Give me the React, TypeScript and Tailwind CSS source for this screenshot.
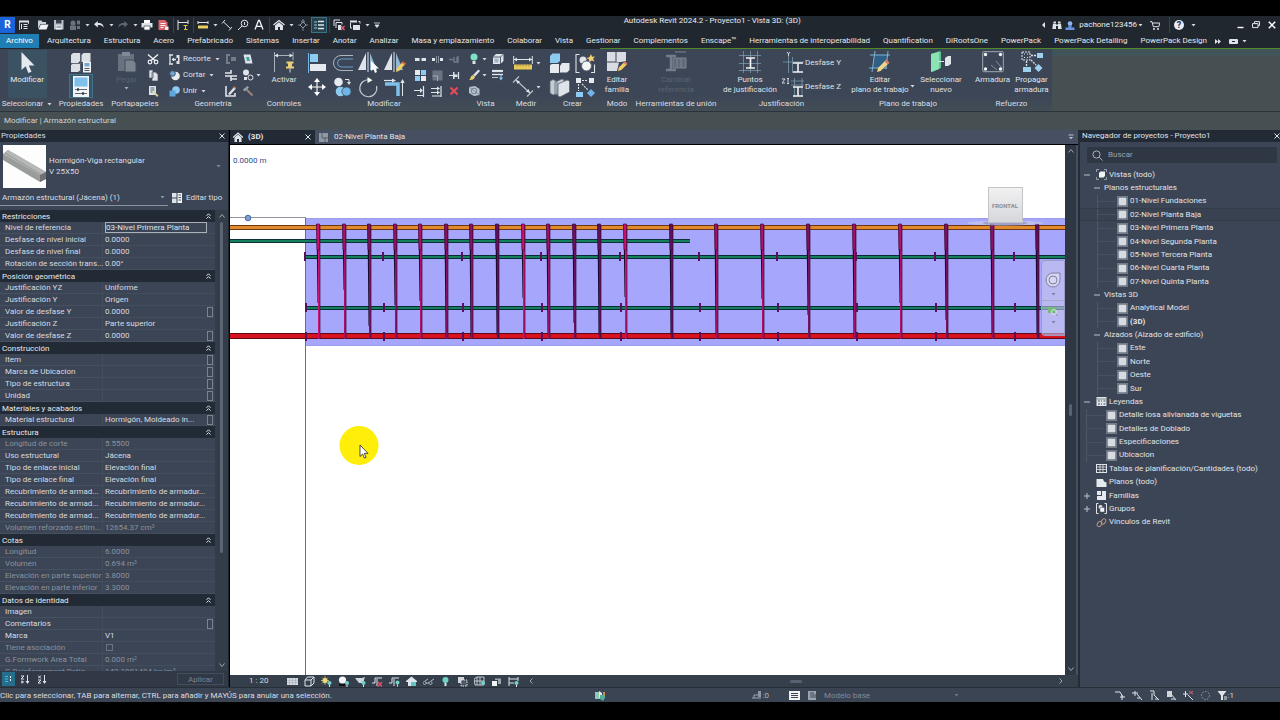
import React from "react";

type IconProps = { s?: number; w?: number; h?: number; className?: string; children?: React.ReactNode };

function Ico({ s = 16, w, h, className = "", children }: IconProps) {
  const vw = w ?? s;
  const vh = h ?? s;
  return (
    <svg width={vw} height={vh} viewBox={`0 0 ${vw} ${vh}`} fill="none" className={`shrink-0 ${className}`} aria-hidden="true">
      {children}
    </svg>
  );
}

const L = "#dfe4ea";
const B = "#9fd0ee";

function Caret({ className = "text-[#d5dae0]" }: { className?: string }) {
  return (
    <svg width="5" height="3" viewBox="0 0 5 3" className={`shrink-0 ${className}`} aria-hidden="true">
      <path d="M0.5 0h4L2.5 2.6z" fill="currentColor" />
    </svg>
  );
}

/* ---------- Quick access toolbar ---------- */

const quick: Record<string, React.ReactNode> = {
  Inicio: (
    <Ico s={12}>
      <path d="M1 1.500h10v2H1z" fill={L} />
      <path d="M1.500 3v8M10.500 3v2" stroke={L} strokeWidth=".8" />
      <path d="M3.500 5v5M5.500 5.500h4M5.500 7.500h4M5.500 9.500h4" stroke={L} />
    </Ico>
  ),
  Abrir: (
    <Ico s={12}>
      <path d="M1 10V1.500h3.500l1 1.500H9v2H3.500z" fill="#c9d0d8" />
      <path d="M3.800 5.500H11.500L9.500 10.500H1.500z" fill="#f0f3f6" />
    </Ico>
  ),
  Guardar: (
    <Ico s={12}>
      <path d="M1 1h9.500v9.500H1z" fill="#b9c1cb" />
      <path d="M3 1h5.500v3.500H3z" fill="#39424f" />
      <path d="M3 6.500h5.500v4H3z" fill="#eef1f4" />
      <path d="M3.500 8h4.500" stroke="#59626f" />
    </Ico>
  ),
  Sincronizar: (
    <Ico s={12}>
      <circle cx="4" cy="4" r="2.500" fill="#6a7380" />
      <path d="M1 6.500h6v4.500H1zM8 1.500h3v4H8zM8 7h3v3H8z" fill="#6a7380" />
    </Ico>
  ),
  Deshacer: (
    <Ico s={12}>
      <path d="M4.800 2 1 5.200l3.800 3.200V6.300c2.500-.6 4.500 0 5.700 2.500.4-3.400-2-5-5.700-4.800z" fill={L} />
    </Ico>
  ),
  Rehacer: (
    <Ico s={12}>
      <path d="M7.200 2 11 5.200 7.200 8.400V6.300c-2.500-.6-4.500 0-5.700 2.500-.4-3.400 2-5 5.700-4.800z" fill="#5d6673" />
    </Ico>
  ),
  Imprimir: (
    <Ico s={12}>
      <path d="M3 1h6v3H3z" fill="#fff" />
      <path d="M.5 4h11v4.500h-11z" fill="#dfe4ea" />
      <path d="M3 7h6v4H3z" fill="#fff" stroke="#39424f" strokeWidth=".7" />
    </Ico>
  ),
  "Exportar PDF": (
    <Ico s={12}>
      <path d="M1.500 1H8l2.500 2.500V11h-9z" fill="#d9646b" />
      <path d="M3.500 4.500h5M3.500 6.500h5M3.500 8.500h3" stroke="#fff" />
      <path d="M8 7.500h3.500V11H8z" fill="#f4e7e8" />
    </Ico>
  ),
  Acotar: (
    <Ico s={12}>
      <path d="M1 1v10M11 1v4M1 3.500h10" stroke={L} strokeWidth="1" />
      <path d="M6.500 6.500h4M8.500 6.500v4M7 10.500h3.500" stroke="#e8c24c" />
    </Ico>
  ),
  Medir: (
    <Ico s={12}>
      <path d="M1 2v3M11 2v3M1 3.500h10" stroke={L} />
      <path d="M1 6.500h10v3H1z" fill="#e9cf62" />
    </Ico>
  ),
  "Cota alineada": (
    <Ico s={12}>
      <path d="M1 4.500 4 1M8 11.500l3-3.500M2.500 3l7 6.500" stroke={L} />
    </Ico>
  ),
  "Etiqueta por categoría": (
    <Ico s={12}>
      <circle cx="7.500" cy="4.500" r="3.300" stroke={L} />
      <path d="M5 7 1 11M7.500 3v3" stroke={L} />
    </Ico>
  ),
  Texto: (
    <Ico s={12}>
      <path d="M2 10.500 5.500 1.500h1L10 10.500M3.300 7.300h5.400" stroke="#f3f5f7" strokeWidth="1.300" />
    </Ico>
  ),
  "Vista 3D": (
    <Ico s={12}>
      <path d="M.5 6 6 1.500 11.500 6" stroke={L} strokeWidth="1.300" />
      <path d="M2 6.500 6 3.300l4 3.200V11H7V8H5v3H2z" fill={L} />
    </Ico>
  ),
  Sección: (
    <Ico s={12}>
      <path d="m6 3 3 3-3 3-3-3z" stroke="#8d97a3" />
      <path d="m6 .5 1.600 2.500H4.400zM6 9v3M1 6h2M9 6h2" stroke="#8d97a3" strokeWidth=".8" />
    </Ico>
  ),
  "Líneas finas": (
    <Ico s={12}>
      <path d="M1 3h3M1 6h3M1 9h3" stroke="#8fc9e0" />
      <path d="M5 2.500h6M5 6h6M5 9.500h6" stroke={L} strokeWidth="1.600" />
    </Ico>
  ),
  "Cerrar inactivas": (
    <Ico s={12}>
      <path d="M1 1h6M1 1v6M3 3.500h6v2M3 3.500V9" stroke={L} />
      <path d="M5 6h3v5H5z" fill={L} />
      <path d="m8 7 3.500 4M11.500 7 8 11" stroke="#e0607a" strokeWidth="1.300" />
    </Ico>
  ),
  "Cambiar ventana": (
    <Ico s={12}>
      <path d="M1 1.500h7v2H1zM4 6h7v5H4z" fill={L} />
      <path d="M1.500 4v5H3M9.500 2.500h1.500v2" stroke={L} />
    </Ico>
  ),
};

function QuickButton({ name, active = false }: { name: string; active?: boolean }) {
  return (
    <button
      type="button"
      aria-label={name}
      className={
        active
          ? "flex h-4 w-4 items-center justify-center border border-[#3d7387] bg-[#26404d]"
          : "flex h-4 w-4 items-center justify-center"
      }
    >
      {quick[name]}
    </button>
  );
}

function QuickCaret() {
  return (
    <button type="button" aria-label="Más opciones" className="flex h-4 w-2 items-center justify-center">
      <Caret />
    </button>
  );
}

function Sep() {
  return (
    <span className="flex h-4 w-1 justify-center">
      <span className="w-px bg-[#39434f]" />
    </span>
  );
}

function TitleBar() {
  return (
    <header className="flex h-[18px] shrink-0 items-center bg-[#20272f]">
      <div className="flex items-center">
        <button type="button" aria-label="Revit" className="mr-px flex h-4 w-[15px] items-center justify-center bg-[#1b63d8] text-[10px] leading-none font-bold text-white">
          R
        </button>
        <QuickButton name="Inicio" />
        <span className="w-[3px]" />
        <QuickButton name="Abrir" />
        <QuickButton name="Guardar" />
        <QuickButton name="Sincronizar" />
        <QuickCaret />
        <QuickButton name="Deshacer" />
        <QuickCaret />
        <QuickButton name="Rehacer" />
        <QuickCaret />
        <QuickButton name="Imprimir" />
        <QuickButton name="Exportar PDF" />
        <Sep />
        <QuickButton name="Acotar" />
        <Sep />
        <QuickButton name="Medir" />
        <QuickCaret />
        <QuickButton name="Cota alineada" />
        <QuickButton name="Etiqueta por categoría" />
        <QuickButton name="Texto" />
        <Sep />
        <QuickButton name="Vista 3D" />
        <QuickCaret />
        <QuickButton name="Sección" />
        <QuickButton name="Líneas finas" active />
        <Sep />
        <QuickButton name="Cerrar inactivas" />
        <QuickButton name="Cambiar ventana" />
        <QuickCaret />
        <button type="button" aria-label="Personalizar barra" className="flex h-4 w-3 items-center justify-center">
          <Ico s={6}>
            <path d="M0 1h6M1 3h4L3 5.600z" stroke={L} strokeWidth=".8" fill={L} />
          </Ico>
        </button>
      </div>
      <h1 className="min-w-0 flex-1 truncate pb-2 pl-1 text-center text-[8px] leading-[12px] text-[#e8ebee]">
        Autodesk Revit 2024.2 - Proyecto1 - Vista 3D: (3D)
      </h1>
      <div className="flex items-center text-[8px] text-[#e8ebee]">
        <button type="button" aria-label="Contraer" className="flex w-3 justify-center">
          <Ico w={3} h={6}>
            <path d="M3 0v6L0 3z" fill={L} />
          </Ico>
        </button>
        <button type="button" aria-label="Buscar ayuda" className="flex w-4 justify-center">
          <Ico w={10} h={9}>
            <path d="M1 2.500h3V8H.3zM6 2.500h3L9.700 8H6zM1.500.5H4v1.500H1.500zM6 .5h2.500V2H6zM4 3.500h2V5H4z" fill={L} />
          </Ico>
        </button>
        <button type="button" className="flex items-center">
          <Ico w={10} h={9} className="mr-1">
            <circle cx="5" cy="2.500" r="2.300" fill="#8fb4ee" />
            <path d="M3.500 4h3v2.500H9.500V9H.5V6.500h3z" fill="#6b95e0" />
          </Ico>
          pachone123456
          <Caret className="ml-px text-[#d5dae0]" />
        </button>
        <button type="button" aria-label="Tienda" className="mx-1 flex w-4 justify-center">
          <Ico w={10} h={9}>
            <path d="M0 .7h2l1.300 5h5.500l1-3.700H2.600" stroke={L} />
            <circle cx="4" cy="8" r="1" fill={L} />
            <circle cx="8" cy="8" r="1" fill={L} />
          </Ico>
        </button>
        <Sep />
        <button type="button" aria-label="Ayuda" className="mr-1 flex w-4 justify-center">
          <span className="flex h-[10px] w-[10px] items-center justify-center rounded-full bg-[#e6edf8] text-[9px] leading-none font-bold text-[#1f2a3c]">?</span>
        </button>
        <Caret className="mr-9 text-[#d5dae0]" />
        <button type="button" aria-label="Minimizar" className="flex w-4 justify-center">
          <Ico w={7} h={8}>
            <path d="M.5 6.500h6" stroke="#fff" strokeWidth="1.400" />
          </Ico>
        </button>
        <button type="button" aria-label="Restaurar" className="flex w-4 justify-center">
          <Ico s={8}>
            <path d="M2.500 2V.6h5v4H6M.5 2.600h5.500v4H.5z" stroke={L} />
          </Ico>
        </button>
        <button type="button" aria-label="Cerrar" className="flex w-4 justify-center">
          <Ico s={8}>
            <path d="m.8.800 6.400 6.400M7.200.8.800 7.200" stroke="#fff" strokeWidth="1.500" />
          </Ico>
        </button>
      </div>
    </header>
  );
}

/* ---------- Ribbon ---------- */

const tabs = [
  "Arquitectura", "Estructura", "Acero", "Prefabricado", "Sistemas", "Insertar", "Anotar", "Analizar",
  "Masa y emplazamiento", "Colaborar", "Vista", "Gestionar", "Complementos", "Enscape™",
  "Herramientas de interoperabilidad", "Quantification", "DiRootsOne", "PowerPack", "PowerPack Detailing", "PowerPack Design",
];

function RibbonTabs() {
  return (
    <nav className="flex h-[14px] shrink-0 items-center bg-[#20272f] text-[8px] text-[#e3e7eb]" aria-label="Fichas">
      <button type="button" className="mr-2 h-[14px] w-[39px] bg-[#1f7fb4] text-white">
        Archivo
      </button>
      <div className="flex items-center gap-[13px] whitespace-nowrap">
        {tabs.map((t) => (
          <button type="button" key={t}>
            {t}
          </button>
        ))}
      </div>
      <button type="button" aria-label="Más fichas" className="ml-2">
        <Ico w={6} h={5}>
          <path d="M0 0v5l3-2.500zM3 0v5l3-2.500z" fill={L} />
        </Ico>
      </button>
      <button type="button" aria-label="Minimizar cinta" className="ml-2 flex items-center gap-1">
        <Ico w={9} h={5}>
          <rect width="9" height="5" rx="1" fill={L} />
          <path d="M3 2.500h3" stroke="#20272f" />
        </Ico>
        <Caret />
      </button>
    </nav>
  );
}

function Panel({ label, className, children, caret = false }: { label: string; className: string; children: React.ReactNode; caret?: boolean }) {
  return (
    <section className={`flex shrink-0 flex-col ${className}`}>
      <div className="flex h-[49px] items-start justify-center pt-[2px]">{children}</div>
      <div className="flex h-[12px] items-center justify-center gap-1 whitespace-nowrap text-[#d9dee4]">
        {label}
        {caret && <Caret />}
      </div>
    </section>
  );
}

function Big({ icon, lines, className = "", dim = false, caret = false }: { icon: React.ReactNode; lines: string[]; className?: string; dim?: boolean; caret?: boolean }) {
  return (
    <button
      type="button"
      disabled={dim}
      className={`flex flex-col items-center whitespace-nowrap leading-[10px] ${dim ? "text-[#596271]" : "text-[#dfe3e8]"} ${className}`}
    >
      <span className="mb-[2px] flex h-[22px] items-center">{icon}</span>
      {lines.map((l, i) => (
        <span key={l} className="relative">
          {l}
          {caret && i === lines.length - 1 && (
            <span className="absolute top-0 -right-[6px]">
              <Caret />
            </span>
          )}
        </span>
      ))}
    </button>
  );
}

function Tool({ name, size = "m", children }: { name: string; size?: "m" | "s"; children: React.ReactNode }) {
  return (
    <button type="button" aria-label={name} className={size === "m" ? "flex h-[24px] w-[22px] items-center justify-center" : "flex h-4 w-[17px] items-center justify-center"}>
      {children}
    </button>
  );
}

function Ribbon() {
  return (
    <div className="flex h-[63px] shrink-0 overflow-hidden border-b border-[#2b333c] bg-[#465052] text-[8px] leading-[10px]">
      <div className="flex shrink-0 bg-gradient-to-b from-[#3d4657] from-75% to-[#424d55]">
        <Panel label="Seleccionar" className="w-[54px]" caret>
          <button type="button" className="-mt-px flex h-[48px] w-[39px] flex-col items-center bg-[#3b5263] pt-[2px] text-[#e6eaee]">
            <Ico w={16} h={22}>
              <path d="M2.500 0v18l4.200-3.800L9.300 21l3.200-1.300-2.700-6.200h5.700z" fill="#e6e9ee" />
            </Ico>
            <span className="mt-px">Modificar</span>
          </button>
        </Panel>

        <Panel label="Propiedades" className="w-[54px]">
          <div className="flex flex-col items-center">
            <button type="button" aria-label="Propiedades de tipo" className="flex h-[23px] w-6 items-center justify-center">
              <Ico s={22}>
                <path d="M1 3 3 1h7v8l-2 2H1zM11.500 3l2-2h7v8l-2 1h-7zM1 13l2-1.500h7v7L8 20H1z" fill="#dde1e6" />
                <path d="M1 11.500h19M10.500 1v19" stroke="#5b6574" strokeWidth=".8" />
                <rect x="13" y="9.500" width="8" height="11" fill="#f2f4f6" />
                <rect x="14.500" y="11" width="5" height="3.500" fill="#6ea9d2" />
                <path d="M14.500 16.500h5M14.500 18.500h5" stroke="#4d5664" />
              </Ico>
            </button>
            <button type="button" aria-label="Propiedades" className="flex h-6 w-6 items-center justify-center border border-[#44738a] bg-[#35566a]">
              <Ico w={16} h={21}>
                <rect width="16" height="21" fill="#f1f3f5" />
                <rect x="1.500" y="1.500" width="13" height="9" fill="#7fc0ea" />
                <path d="M2 13.500h12M2 17.500h12" stroke="#5a6472" />
                <path d="M5 12v3M10 16v3" stroke="#2f3945" strokeWidth="1.500" />
              </Ico>
            </button>
          </div>
        </Panel>

        <Panel label="Portapapeles" className="w-[54px]">
          <button type="button" disabled className="flex w-9 flex-col items-center text-[#566070]">
            <Ico s={22}>
              <path d="M2 3h16v17H2z" fill="#687180" />
              <path d="M6 1h8v4H6z" fill="#808995" />
              <path d="M9 9h8l3 3v9H9z" fill="#7a8390" stroke="#454e5d" />
            </Ico>
            <span className="my-[2px]">Pegar</span>
            <Caret className="text-[#aab1ba]" />
          </button>
          <div className="flex flex-col">
            <Tool name="Cortar al portapapeles" size="s">
              <Ico s={12}>
                <path d="M1 1.500 8.500 8M11 1.500 3.500 8" stroke="#f1f3f5" strokeWidth="1.400" />
                <circle cx="3" cy="9" r="1.800" stroke="#f1f3f5" strokeWidth="1.200" />
                <circle cx="9" cy="9" r="1.800" stroke="#f1f3f5" strokeWidth="1.200" />
              </Ico>
            </Tool>
            <Tool name="Copiar al portapapeles" size="s">
              <Ico s={12}>
                <path d="M2 1h4v8H2zM5 3h3.500L11 5.500V12H5z" fill={L} stroke="#48515f" strokeWidth=".7" />
              </Ico>
            </Tool>
            <Tool name="Copiar propiedades" size="s">
              <Ico s={12}>
                <path d="M2 1h7v9H2z" fill={L} />
                <path d="M3.500 3h4M3.500 5h4M3.500 7h2" stroke="#56606e" />
                <path d="m7 6 4.500 4.500-1.500 1.500L6.500 8z" fill="#d8cf93" />
              </Ico>
            </Tool>
          </div>
        </Panel>

        <Panel label="Geometría" className="w-[102px]">
          <div className="flex w-[57px] flex-col text-[#dfe3e8]">
            {[
              ["Recorte", <Ico s={11} key="a"><path d="M1 1v9M0 1h4M0 10h4M3 5.500h4M4.500 4v3" stroke={L} strokeWidth="1.300" /><path d="M7.500 1h3v9h-3V7h1.500V4H7.500z" fill={L} /></Ico>],
              ["Cortar", <Ico s={11} key="b"><circle cx="6.500" cy="6" r="4.300" fill="#e9edf1" /><circle cx="3.500" cy="3.500" r="2.800" fill="#6aa9d6" stroke="#454e5d" /></Ico>],
              ["Unir", <Ico s={11} key="c"><circle cx="7" cy="4" r="3.800" fill="#8ecbf2" /><path d="M.5 4.500h6V10.500h-6z" fill="#5fa6dc" /></Ico>],
            ].map(([name, icon]) => (
              <button type="button" key={name as string} className="flex h-4 items-center gap-[3px] pl-1">
                {icon}
                <span>{name}</span>
                <Caret className="ml-px text-[#d5dae0]" />
              </button>
            ))}
          </div>
          <div className="grid grid-cols-[17px_22px]">
            <Tool name="Unión de vigas" size="s">
              <Ico s={12}><path d="M1 1h4v2H3v6h2v2H1zM6 4h5v4H6z" fill="#737c89" /></Ico>
            </Tool>
            <Tool name="Dividir cara" size="s">
              <Ico s={12}><path d="M1.500 1.500h7l2 9h-7z" fill="#dfe4ea" /><path d="M4 4h3l1 4H5z" fill="#3aa7a0" /></Ico>
            </Tool>
            <Tool name="Uniones de muro" size="s">
              <Ico s={12}><path d="M0 4h6V1M0 7h12M6 10h6M6 7v5" stroke={L} strokeWidth="1.600" /></Ico>
            </Tool>
            <div className="flex items-center">
              <Tool name="Pintar" size="s">
                <Ico s={12}><circle cx="4" cy="3.500" r="3" fill={L} /><circle cx="8.500" cy="8.500" r="2.500" stroke={L} /><path d="M2 8h3v3H2z" fill={L} /></Ico>
              </Tool>
              <Caret />
            </div>
            <Tool name="Pintura" size="s">
              <Ico s={12}><path d="M1 1v10h9V8" stroke={L} strokeWidth="1.600" /><path d="m3 9 6-7 2 1.500-6 6.500z" fill={L} /><path d="m8.500 1.800 2.200 1.600" stroke="#d27a3f" strokeWidth="1.500" /></Ico>
            </Tool>
            <Tool name="Demoler" size="s">
              <Ico s={12}><path d="m4.500 4.500 6 6" stroke="#a08478" strokeWidth="1.800" /><path d="M1 4.500 5.500 1 7 2.500 2.500 6.500z" fill="#9aa2ad" /></Ico>
            </Tool>
          </div>
        </Panel>

        <Panel label="Controles" className="w-10">
          <Big
            lines={["Activar"]}
            icon={
              <Ico s={22}>
                <path d="M1.500 1v20M20 1v8M2 4.500h18" stroke="#a9b1bb" />
                <path d="M1.500 4.500 5 2.500v4zM20 4.500l-3.500-2v4z" fill={L} />
                <path d="M13.500 10.500h7v2h-1.500v3h2v2h-8v-2h2v-3h-1.500z" fill="#e7cf78" />
                <path d="M17 17.500v4" stroke="#d5dae0" />
              </Ico>
            }
          />
        </Panel>

        <Panel label="Modificar" className="w-40">
          <div className="grid grid-cols-4 gap-x-1">
            <Tool name="Alinear">
              <Ico s={20}><path d="M1.500 0v20" stroke="#73b7e6" strokeWidth="1" /><rect x="3" y="1" width="8" height="8" fill="#8ecbf2" /><rect x="3" y="11" width="16" height="7" fill="#e6eaee" /></Ico>
            </Tool>
            <Tool name="Desfase">
              <Ico s={20}><path d="M20 2.500H8a7 7 0 0 0 0 15h12" stroke="#b9c1cb" strokeWidth=".9" /><path d="M20 6H8.500a4 4 0 0 0 0 8H20" stroke="#6ea9d2" strokeWidth=".9" /></Ico>
            </Tool>
            <Tool name="Simetría - Seleccionar eje">
              <Ico s={22}><path d="M0 18 8 1v17z" fill="#dfe4ea" /><path d="M12 1v17h7z" fill="#8fb9d4" /><path d="M10 0v20" stroke="#dfe4ea" /><path d="M13 9v10l2.500-2 1.500 4 2-1-1.500-3.500H21z" fill="#fff" /></Ico>
            </Tool>
            <Tool name="Simetría - Dibujar eje">
              <Ico s={22}><path d="M0 18 8 1v17z" fill="#dfe4ea" /><path d="M12 1v17h7z" fill="#8fb9d4" /><path d="M10 0v20" stroke="#dfe4ea" /><path d="m12 20 .7-3.300 6-7 2.600 2.200-6 6.800z" fill="#f0cf62" /><path d="m18.200 10 3.200 2.500" stroke="#d9654b" strokeWidth="2.200" /></Ico>
            </Tool>
            <Tool name="Desplazar">
              <Ico s={20}><path d="M10 3v14M3 10h14" stroke="#fff" strokeWidth="1.100" /><path d="m10 1 3 4H7zM10 19l3-4H7zM1 10l4-3v6zM19 10l-4-3v6z" fill="#fff" /></Ico>
            </Tool>
            <Tool name="Copiar">
              <Ico s={20}><circle cx="5.500" cy="5" r="4.300" fill="#e6eaee" /><circle cx="7.500" cy="14.500" r="4.800" fill="#8ecbf2" /><circle cx="13.500" cy="14.500" r="4.600" fill="#6fb4e6" stroke="#3d4657" strokeWidth=".8" /><path d="M12 2.500h4v3" stroke={L} /><path d="M14 5h4l-2 3z" fill={L} /></Ico>
            </Tool>
            <Tool name="Girar">
              <Ico s={21}><path d="M12.500 3A8.500 8.500 0 1 0 18.500 9" stroke="#c6ccd4" strokeWidth="1.100" /><path d="M9.500 0v6l5-2.800z" fill="#fff" /></Ico>
            </Tool>
            <Tool name="Recortar">
              <Ico s={21}><path d="M0 3.500h8" stroke={L} strokeWidth="1.200" /><path d="M1 7h13v12" stroke="#7fc0ea" strokeWidth="3.500" /><path d="M18.500 19V6" stroke={L} /><path d="m18.500 2 2.200 4h-4.400zM8 1.500l4 2-4 2z" fill={L} /></Ico>
            </Tool>
          </div>
          <div className="ml-[6px] grid grid-cols-3">
            <Tool name="Dividir elemento" size="s"><Ico s={11}><path d="M0 4h4.500v3H0zM6.500 4H11v3H6.500z" fill={L} /></Ico></Tool>
            <Tool name="Dividir con hueco" size="s"><Ico s={11}><path d="M0 4h3v3H0zM8 4h3v3H8z" fill={L} /><path d="M4.500 2v7M6.500 2v7" stroke="#9aa3ae" strokeWidth=".8" /></Ico></Tool>
            <Tool name="Desbloquear" size="s"><Ico s={11}><path d="M0 5.500h4M5 3v5h3V3M9 2v7" stroke="#6f7886" strokeWidth="1.500" /></Ico></Tool>
            <Tool name="Matriz" size="s"><Ico s={11}><path d="M0 0h5v5H0zM6 6h5v5H6z" fill="#e6eaee" /><path d="M6 0h5v5H6zM0 6h5v5H0z" fill="#8ecbf2" /></Ico></Tool>
            <Tool name="Escala" size="s"><Ico s={11}><rect x=".5" y=".5" width="10" height="10" fill="#6a7381" /><path d="M.5 6h5v5" stroke="#a1a9b4" /></Ico></Tool>
            <Tool name="Bloquear" size="s"><Ico s={11}><path d="M0 5.500h4M9.500 2v7" stroke={L} strokeWidth="1.200" /><path d="M4 2h1.500v2.500h3v2.500h-3V9H4z" fill={L} /></Ico></Tool>
            <Tool name="Alargar elemento" size="s"><Ico s={12}><path d="M0 5.500h7M9.500 1v11M3 10.500h6" stroke={L} strokeWidth="1.200" /><path d="m6 3 3 2.500L6 8z" fill={L} /></Ico></Tool>
            <Tool name="Alargar varios" size="s"><Ico s={12}><path d="M0 3.500h6M0 7.500h6M10 1v11M1 11h9" stroke={L} strokeWidth="1.200" /><path d="M6 1.500 9 3.500 6 5.500zM6 5.500l3 2-3 2z" fill={L} /></Ico></Tool>
            <Tool name="Suprimir" size="s"><Ico s={10}><path d="m1.500 1.500 7 7M8.500 1.500l-7 7" stroke="#ee4a57" strokeWidth="2" /></Ico></Tool>
          </div>
        </Panel>

        <Panel label="Vista" className="w-[43px]">
          <div className="grid grid-cols-[24px_17px]">
            <div className="flex items-center"><Tool name="Ocultar en vista" size="s"><Ico w={8} h={12}><circle cx="4" cy="4" r="3.500" fill="#7fe0c6" /><path d="M2.500 8h3v3h-3z" fill={L} /></Ico></Tool><Caret /></div>
            <Tool name="Caja de sección" size="s"><Ico s={12}><path d="m1 4 3-3h7.500v7l-3 3H1z" fill="#dfe4ea" /><path d="M1 4h7.500v7M8.500 4l3-3" stroke="#556070" /><path d="M2.500 5.500h4v4h-4z" fill="#9fb6ca" /></Ico></Tool>
            <div className="flex items-center"><Tool name="Modificar gráficos" size="s"><Ico s={12}><path d="m5 6 5.500-5.500L12 2 7 7.500z" fill="#dfe4ea" /><path d="M5 6 7 8c-1 3-4 3-6 3 2-1 1-4 4-5z" fill="#e6cf72" /></Ico></Tool><Caret /></div>
            <Tool name="Cambiar grosor" size="s"><Ico s={12}><path d="M0 2h11" stroke={L} strokeWidth="2.200" /><path d="M0 5.500h11" stroke={L} strokeWidth="1.400" /><path d="M0 8.500h6" stroke={L} strokeWidth=".8" /><path d="M9 6v4" stroke="#8ecbf2" /><path d="M7 8.500h4L9 11.500z" fill="#8ecbf2" /></Ico></Tool>
            <Tool name="Ocultar categoría" size="s"><Ico s={12}><path d="m1 2 6-1 4.500 3v6L6 11 1 8z" fill="#b8c3ce" /><circle cx="6" cy="6" r="2.800" stroke="#6f7f90" /><path d="m1 2 10.500 8" stroke="#6f7f90" strokeWidth=".7" /></Ico></Tool>
          </div>
        </Panel>

        <Panel label="Medir" className="w-[38px]">
          <div className="flex flex-col">
            <div className="flex items-center gap-[2px]">
              <Tool name="Medir distancia"><Ico s={20}><path d="M.7 3v8M19.300 3v8M1 6.500h18" stroke={L} /><path d="M1 6.500 4 4.500v4zM19 6.500l-3-2v4z" fill={L} /><path d="M1 11.500h18v5H1z" fill="#e9c958" /><path d="M4 11.500v2M7 11.500v2M10 11.500v2M13 11.500v2M16 11.500v2" stroke="#8a7a3c" strokeWidth=".8" /></Ico></Tool>
              <Caret />
            </div>
            <div className="flex items-center gap-[2px]">
              <Tool name="Acotar alineado"><Ico s={22}><path d="M1 6.500 7 .5M15 20.500l6-6M4 4l14 13" stroke="#b9c1cb" strokeWidth="1.100" /><path d="m4 4 4 1.500L5.500 8zM18 17l-4-1.500 2.500-2.500z" fill="#dfe4ea" /></Ico></Tool>
              <Caret />
            </div>
          </div>
        </Panel>

        <Panel label="Crear" className="w-[55px]">
          <div className="grid grid-cols-2 gap-x-1">
            <Tool name="Crear piezas"><Ico s={21}><path d="m1 3 2.500-2.500H11V8L8.500 10H1z" fill="#8ecbf2" /><path d="m1 12 2-1h7v9H1zM11 13l2-3h7.500v7L18 19.500h-7z" fill="#e6eaee" /></Ico></Tool>
            <Tool name="Crear grupo"><Ico s={21}><path d="M4.500 1.500H1v18h3.500M16 19.500h3.500v-8" stroke={L} strokeWidth="1.100" /><circle cx="8" cy="7" r="3.500" fill={L} /><circle cx="11.500" cy="13" r="5" fill="#f2f4f6" stroke="#56606e" /><path d="m16 1 1 2.800 3-.3-2 2.200 1.500 2.600-2.900-.8-2.300 1.700-.3-2.900L11.500 5l2.900-.7z" fill="#f4cf74" /></Ico></Tool>
            <Tool name="Crear montaje"><Ico s={21}><path d="M1 4 4 2.500l4 2V17l-4 1-3-2zM6 5l7-3 2 1v11l-7 4-2-1z" fill="#c6ccd3" stroke="#596371" strokeWidth=".8" /><path d="m9 7 9-4 2.500 1v11L11 20l-2-1z" fill="#dfe4ea" stroke="#596371" strokeWidth=".8" /></Ico></Tool>
            <Tool name="Crear similar"><Ico s={21}><path d="M1 1h5v5H1zM14 1h5v5h-5z" fill="#e6eaee" /><path d="M1 15h7v5H1z" fill="#8ecbf2" /><path d="m16 12 4 4-4 4-4-4z" fill="#6fb4e6" /><path d="M7 3.500h6M3.500 7v7M7 7l6 6" stroke={L} strokeDasharray="2 1" strokeWidth="1.100" /></Ico></Tool>
          </div>
        </Panel>

        <Panel label="Modo" className="w-[34px]">
          <Big lines={["Editar", "familia"]} icon={<Ico s={22}><path d="M1 1h8.500v9.500H1zM10.500 1H20v9l-5 1-4.500 0zM1 11.500h12L11 20H1z" fill="#d9dde3" /><path d="m12 20 .8-3.500 6-6 2.500 2.500-6 6z" fill="#f0cf62" /><path d="m18.300 11 2.500 2.500" stroke="#d97a6b" strokeWidth="2" /></Ico>} />
        </Panel>

        <Panel label="Herramientas de unión" className="w-[84px]">
          <Big dim lines={["Cambiar", "referencia"]} icon={<Ico s={22}><path d="M1 5h10M1 19h10M6 5v14" stroke="#737c89" strokeWidth="2.500" /><path d="M8 7h13v10H8z" fill="#606a78" stroke="#7b8492" /><path d="M12 7v10M16 7v10M10 1h11" stroke="#7b8492" /></Ico>} />
        </Panel>

        <Panel label="Justificación" className="w-[127px]">
          <Big className="w-14" lines={["Puntos", "de justificación"]} icon={<Ico s={22}><path d="M0 4.500h22M0 12.500h22M0 19.500h22M4.500 0v22M11.500 0v22M18.500 0v22" stroke="#80a3b5" strokeWidth=".7" /><path d="M7 7h9M7 17h9M11.500 7v10" stroke="#f1f3f5" strokeWidth="1.700" /></Ico>} />
          <div className="ml-1 flex flex-col text-[#dfe3e8]">
            <button type="button" className="flex h-6 items-center gap-px whitespace-nowrap">
              <Ico s={22}><path d="M1 10h21M6.500 5v16M10.500 5v16" stroke="#80a3b5" strokeWidth=".7" /><path d="m5 0 1.500 2L8 0M6.500 2v2.500" stroke={L} strokeWidth=".9" /><path d="M11 11h10M11 20h10M16 11v9" stroke="#f1f3f5" strokeWidth="1.600" /></Ico>
              Desfase Y
            </button>
            <button type="button" className="flex h-6 items-center gap-px whitespace-nowrap">
              <Ico s={22}><path d="M9 5h13M9 9h13M12.500 2v19M20 2v19" stroke="#80a3b5" strokeWidth=".7" /><path d="M0 3h3L0 7h3M6 2.500v5M5 2.500h2M5 7.500h2" stroke={L} strokeWidth=".9" /><path d="M11 11h10M11 20h10M16 11v9" stroke="#f1f3f5" strokeWidth="1.600" /></Ico>
              Desfase Z
            </button>
          </div>
        </Panel>

        <Panel label="Plano de trabajo" className="w-[126px]">
          <Big caret className="w-[66px]" lines={["Editar", "plano de trabajo"]} icon={<Ico s={22}><path d="M5 4h14l-2 13H4z" fill="#315f86" /><path d="M1 4h20M0 17h18M6 0 3 21M19 0l-2 18" stroke="#7fb2d6" /><path d="m8 21 1-4 8-8 3 3-8.500 8z" fill="#f0d48a" /><path d="m16.500 9.500 3 3" stroke="#d97a6b" strokeWidth="2.500" /></Ico>} />
          <Big className="w-14" lines={["Seleccionar", "nuevo"]} icon={<Ico s={22}><path d="m1 3 9-3 1 1v16l-9 4-1-1z" fill="#5cc78e" /><path d="m1 3 8-2v17l-8 3z" fill="#8be2b4" /><path d="M8 10.500h6" stroke={L} /><path d="m15 7 3-2h3v8l-3 2h-3z" fill="#e1e5ea" /></Ico>} />
        </Panel>

        <Panel label="Refuerzo" className="w-[81px]">
          <Big className="w-10" lines={["Armadura"]} icon={<Ico s={22}><rect x=".7" y=".7" width="20.600" height="20" rx="1" stroke="#a9b1bb" strokeWidth=".9" /><circle cx="3.500" cy="3.500" r="1.700" fill="#f2f4f6" /><circle cx="18.500" cy="3.500" r="1.700" fill="#f2f4f6" /><circle cx="3.500" cy="18" r="1.700" fill="#f2f4f6" /><circle cx="18.500" cy="18" r="1.700" fill="#f2f4f6" /><path d="m9 14 6 5M14 10l6 7" stroke="#9aa3ae" strokeWidth=".8" /></Ico>} />
          <Big className="w-[38px]" lines={["Propagar", "armadura"]} icon={<Ico s={22}><rect x="1" y="1" width="8" height="8" stroke={L} strokeDasharray="2 1" /><path d="M3 3h1M6 3h1M3 6.500h1M6 6.500h1" stroke={L} /><path d="M16 2h6v5h-6zM2 16h8v5H2z" fill={B} /><path d="m17.500 13 4 4-4 4-4-4z" fill={B} /><path d="M10 4.500h5M5.500 10v5M10 9l5 5" stroke={L} strokeDasharray="2 1" strokeWidth="1.300" /></Ico>} />
        </Panel>
      </div>
      <div className="h-[7px] flex-1 bg-[#415459]" />
    </div>
  );
}

/* ---------- Properties palette ---------- */

type Prop = { n: string; v?: string; sup?: string; dim?: boolean; box?: boolean; input?: boolean; check?: boolean };
const groups: { title: string; rows: Prop[] }[] = [
  { title: "Restricciones", rows: [
    { n: "Nivel de referencia", v: "03-Nivel Primera Planta", input: true },
    { n: "Desfase de nivel inicial", v: "0.0000" },
    { n: "Desfase de nivel final", v: "0.0000" },
    { n: "Rotación de sección trans...", v: "0.00°" },
  ] },
  { title: "Posición geométrica", rows: [
    { n: "Justificación YZ", v: "Uniforme" },
    { n: "Justificación Y", v: "Origen" },
    { n: "Valor de desfase Y", v: "0.0000", box: true },
    { n: "Justificación Z", v: "Parte superior" },
    { n: "Valor de desfase Z", v: "0.0000", box: true },
  ] },
  { title: "Construcción", rows: [
    { n: "Item", box: true },
    { n: "Marca de Ubicacion", box: true },
    { n: "Tipo de estructura", box: true },
    { n: "Unidad", box: true },
  ] },
  { title: "Materiales y acabados", rows: [{ n: "Material estructural", v: "Hormigón, Moldeado in...", box: true }] },
  { title: "Estructura", rows: [
    { n: "Longitud de corte", v: "5.5500", dim: true },
    { n: "Uso estructural", v: "Jácena" },
    { n: "Tipo de enlace inicial", v: "Elevación final" },
    { n: "Tipo de enlace final", v: "Elevación final" },
    { n: "Recubrimiento de armad...", v: "Recubrimiento de armadur..." },
    { n: "Recubrimiento de armad...", v: "Recubrimiento de armadur..." },
    { n: "Recubrimiento de armad...", v: "Recubrimiento de armadur..." },
    { n: "Volumen reforzado estim...", v: "12654.37 cm", sup: "3", dim: true },
  ] },
  { title: "Cotas", rows: [
    { n: "Longitud", v: "6.0000", dim: true },
    { n: "Volumen", v: "0.694 m", sup: "3", dim: true },
    { n: "Elevación en parte superior", v: "3.8000", dim: true },
    { n: "Elevación en parte inferior", v: "3.3000", dim: true },
  ] },
  { title: "Datos de identidad", rows: [
    { n: "Imagen" },
    { n: "Comentarios", box: true },
    { n: "Marca", v: "V1" },
    { n: "Tiene asociación", check: true, dim: true },
    { n: "G.Formwork Area Total", v: "0.000 m", sup: "2", dim: true },
    { n: "G.Reinforcement Ratio", v: "142.1981484 kg/m", sup: "3", dim: true },
  ] },
];

function CloseX() {
  return (
    <Ico s={6}>
      <path d="m.5.500 5 5M5.500.5l-5 5" stroke={L} />
    </Ico>
  );
}

function PropertyTable() {
  return (
    <table className="w-full table-fixed border-separate border-spacing-0 text-[8px] leading-[11px] whitespace-nowrap">
      <colgroup>
        <col className="w-[102px]" />
        <col />
        <col className="w-[8px]" />
      </colgroup>
      {groups.map((g) => (
        <tbody key={g.title}>
          <tr className="h-3 bg-[#222a35]">
            <th colSpan={3} scope="rowgroup" className="h-3 p-0 text-left font-normal text-[#e6e9ed]">
              <span className="flex h-3 items-center justify-between pr-1 pl-[2px]">
                {g.title}
                <button type="button" aria-label={`Contraer ${g.title}`}>
                  <Ico w={5} h={6}>
                    <path d="M.5 2.800 2.500.8l2 2M.5 5.600l2-2 2 2" stroke={L} />
                  </Ico>
                </button>
              </span>
            </th>
          </tr>
          {g.rows.map((r, i) => (
            <tr key={i} className={r.dim ? "h-3 text-[#8a929e]" : "h-3 text-[#d7dbe1]"}>
              <th scope="row" className="h-3 border-b border-[#465060] p-0 pl-[5px] text-left font-normal">{r.n}</th>
              <td className="h-3 border-b border-l border-[#434d5c] p-0 pl-[2px]">
                {r.input ? (
                  <input
                    aria-label={r.n}
                    defaultValue={r.v}
                    className="block h-[11px] w-full border border-[#aab1bb] bg-transparent p-0 text-[8px] leading-[9px] text-[#dfe3e8] outline-none"
                  />
                ) : r.check ? (
                  <input type="checkbox" aria-label={r.n} disabled className="ml-px block h-[7px] w-[7px] appearance-none border border-[#697280]" />
                ) : (
                  <>
                    {r.v}
                    {r.sup && <sup className="text-[5px] leading-none">{r.sup}</sup>}
                  </>
                )}
              </td>
              <td className="h-3 border-b border-[#434d5c] p-0">
                {r.box && <button type="button" aria-label={`Asociar ${r.n}`} className="block h-[10px] w-[6px] border border-[#79828e]" />}
              </td>
            </tr>
          ))}
        </tbody>
      ))}
    </table>
  );
}

function PropertiesPalette() {
  return (
    <aside className="mr-px flex w-[229px] shrink-0 flex-col border-r border-[#20262e] bg-[#3c4555] text-[8px] text-[#d9dde3]">
      <div className="flex h-3 shrink-0 items-center justify-between bg-[#222a35] pr-[3px] pl-px">
        <h2>Propiedades</h2>
        <button type="button" aria-label="Cerrar propiedades"><CloseX /></button>
      </div>
      <button type="button" className="flex h-12 shrink-0 items-center pr-[7px] pl-[3px] text-left">
        <Ico w={43} h={43}>
          <rect width="43" height="43" fill="#fdfdfd" />
          <path d="M0 9 5 5l38 22v7l-6 3L0 15z" fill="#9a9c9c" />
          <path d="M0 9 5 5l38 22-6 3z" fill="#b6b8b8" />
          <path d="M37 30v7l6-3v-7z" fill="#6f7171" />
          <path d="m2 8 36 21.500" stroke="#8a8c8c" strokeWidth=".7" />
        </Ico>
        <span className="ml-[3px] flex-1 leading-[11px]">
          Hormigón-Viga rectangular
          <br />V 25X50
        </span>
        <Caret className="text-[#838b97]" />
      </button>
      <div className="flex h-[20px] shrink-0 items-center pb-1">
        <label className="relative flex h-4 w-[168px] items-center border-b border-[#8a929e]">
          <select aria-label="Categoría" className="h-full w-full appearance-none bg-transparent pl-[2px] text-[8px] outline-none">
            <option>Armazón estructural (Jácena) (1)</option>
          </select>
          <span className="pointer-events-none absolute right-[3px]"><Caret className="text-[#8f97a2]" /></span>
        </label>
        <button type="button" className="ml-1 flex items-center gap-1 whitespace-nowrap">
          <Ico w={10} h={10}>
            <path d="M0 0h4.500v4.500H0zM0 5.500h4.500V10H0z" fill={L} />
            <path d="M5.500 0H10v10H5.500z" fill="#f2f4f6" />
            <path d="M6.500 2h2.500M6.500 4.500h2.500M6.500 7h2.500" stroke="#48515f" />
          </Ico>
          Editar tipo
        </button>
      </div>
      <div className="flex min-h-0 flex-1">
        <div className="min-w-0 flex-1 overflow-hidden">
          <PropertyTable />
        </div>
        <div className="flex w-[13px] flex-col items-center justify-between bg-[#343c49] py-1">
          <Ico w={6} h={4}><path d="m.5 3.500 2.500-3 2.500 3" stroke="#9fa7b2" /></Ico>
          <span className="w-[3px] flex-1 pt-1"><span className="block h-3/4 w-full rounded bg-[#5c6573]" /></span>
          <Ico w={6} h={4}><path d="m.5.500 2.500 3 2.500-3" stroke="#9fa7b2" /></Ico>
        </div>
      </div>
      <div className="flex h-4 shrink-0 items-center gap-[3px] bg-[#313946] pr-1 pl-[2px]">
        <button type="button" aria-label="Orden por defecto" className="flex h-[14px] w-[13px] items-center justify-center bg-[#256f8c]">
          <Ico s={8}><path d="M0 1.500h3M0 4h3M0 6.500h3" stroke="#53b7dc" /><path d="M5.500 1v6" stroke="#e6eaee" strokeDasharray="2 1" /></Ico>
        </button>
        <button type="button" aria-label="Orden ascendente" className="flex h-[14px] w-[14px] items-center justify-center">
          <Ico s={9}><path d="M0 1h3L0 4h3M1 5.500v3M0 7h3M6.500 0v8" stroke={L} /><path d="M4.500 6h4l-2 3z" fill={L} /></Ico>
        </button>
        <button type="button" aria-label="Orden descendente" className="flex h-[14px] w-[14px] items-center justify-center">
          <Ico s={9}><path d="M0 .5 3 3.500M3 .5 0 3.500M0 5h3L0 8h3M6.500 0v8" stroke={L} /><path d="M4.500 6h4l-2 3z" fill={L} /></Ico>
        </button>
        <button type="button" disabled className="ml-auto h-3 w-[47px] border border-[#444d5b] text-[#7b8491]">
          Aplicar
        </button>
      </div>
    </aside>
  );
}

/* ---------- 3D view ---------- */

// Stirrups: x position, y where the dark rear leg ends, colour of the front leg.
const PINK = "#cf1272";
const PLUM = "#7a1262";
const stirrups: [number, number, string][] = [
  [88, 158, PINK], [114, 145, "#a51268"], [139, 181, PLUM], [165, 160, "#94126a"], [190, 156, "#b0126c"], [216, 192, "#85125f"],
  [241, 192, "#8a1266"], [267, 190, "#5a1260"], [293, 153, PINK], [318, 190, "#9a126a"], [344, 178, "#6a1262"], [369, 190, "#5a1260"],
  [395, 152, PINK], [441, 190, "#5a1260"], [486, 190, "#a01268"], [532, 154, "#ad126a"], [578, 170, PLUM], [624, 192, "#a01268"],
  [670, 158, "#b3126c"], [716, 175, PLUM], [762, 190, "#8a1266"], [807, 190, "#5c1058"],
];
const tiesTop = [75, 153, 232, 311, 390, 469, 547, 626, 705, 784];

function Bar({ y, h, x2 = "100%", x1 = 0, fill, edge }: { y: number; h: number; x1?: number; x2?: string | number; fill: string; edge: string }) {
  const mid = y + h / 2;
  return (
    <g>
      <line x1={x1} x2={x2} y1={mid} y2={mid} stroke={edge} strokeWidth={h} />
      <line x1={x1} x2={x2} y1={mid} y2={mid} stroke={fill} strokeWidth={h - 2} />
    </g>
  );
}

function BeamDrawing() {
  return (
    <svg className="block h-full w-full" role="img" aria-label="Alzado de viga con armadura">
      <rect x="75" y="73" width="100%" height="128" fill="#a7a6fd" />
      <path d="M75 73.500h3000M75 200.500h3000" stroke="#9a9cec" />
      <path d="M0 72.500h76" stroke="#8f949c" />
      <path d="M75.500 73v3000" stroke="#707070" />
      <Bar y={80} h={5} fill="#e08a2c" edge="#6b3714" />
      <Bar y={94} h={4} x2={460} fill="#14805c" edge="#0b3038" />
      <Bar y={110} h={4} x1={75} fill="#14805c" edge="#0b2a38" />
      <Bar y={161} h={4} x1={75} fill="#14805c" edge="#0b2a38" />
      <Bar y={188} h={6} fill="#d81220" edge="#5c0a14" />
      {stirrups.map(([x, end, c]) => (
        <g key={x}>
          <path d={`M${x - 1.500} 79h2L${x + 0.800} ${end}h-1.300z`} fill="#1d0a2c" />
          <path d={`M${x + 1} 80V194`} stroke={c} strokeWidth="2" />
          <path d={`M${x + 2} 80V194`} stroke="#3d0a3c" strokeWidth=".7" />
          <path d={`M${x - 1.500} 79h3v26h-2.500z`} fill={c} stroke="#4c0a3c" strokeWidth=".7" />
        </g>
      ))}
      {tiesTop.map((x) => (
        <g key={x} stroke="#5a0f5e" strokeWidth="2">
          <path d={`M${x} 107v9`} />
          <path d={`M${x + 1} 158v9M${x + 1} 187v9`} />
        </g>
      ))}
      <circle cx="18" cy="73" r="2.800" fill="#7d9fd6" stroke="#4565a6" />
      <circle cx="129" cy="300.500" r="19.500" fill="#ffee0a" />
      <path d="M130 300v11.500l2.600-2.400 1.800 4 1.700-.8-1.800-3.900h3.700z" fill="#fff" stroke="#222" strokeWidth=".8" />
    </svg>
  );
}

const viewIcons: [string, React.ReactNode][] = [
  ["Nivel de detalle", <><path d="M0 2h11v7H0z" fill="#d5dae0" /><path d="M0 4.300h11M0 6.600h11M2.500 2v7M5.500 2v7M8.500 2v7" stroke="#9aa3ae" strokeWidth=".5" /></>],
  ["Estilo visual", <path d="M1 4h6v6H1zM1 4l2.500-3H10v6L7 10M7 4l3-3" stroke={L} />],
  ["Camino de sol", <><circle cx="4" cy="4.500" r="2.500" fill="#eedb78" /><path d="M4 0v9M0 4.500h8M1 1.500l6 6M7 1.500l-6 6" stroke="#eedb78" strokeWidth=".7" /><circle cx="8.500" cy="7" r="2" fill="#6fd3c9" /><path d="M8.500 9v2" stroke={L} /></>],
  ["Sombras", <><circle cx="4.500" cy="4" r="3.600" fill="#f2f4f6" /><path d="M1 9h6" stroke="#111" strokeWidth="2" /><circle cx="9" cy="7" r="2" fill="#6fd3c9" /><path d="M9 9v2" stroke={L} /></>],
  ["Renderización", <><path d="M0 2h7l3-1-2 6H4z" fill="#cfd5db" /><circle cx="8.500" cy="7" r="2" fill="#6fd3c9" /><path d="M8.500 9v2" stroke={L} /></>],
  ["Recortar vista", <><path d="M0 7h3V2h7M5 3v7" stroke={L} /><path d="m6 6 4 4.500M10 6l-4 4.500" stroke="#e4506a" strokeWidth="1.300" /></>],
  ["Mostrar región", <><path d="M0 7h3V2h7M5 3v7" stroke={L} /><circle cx="8.500" cy="6.500" r="2" fill="#6fd3c9" /><path d="M8.500 8.500v2" stroke={L} /></>],
  ["Bloquear vista 3D", <><path d="M0 5 5.500.5 11 5v1H9v4H2V6H0z" fill="#dfe4ea" /><path d="M5 6h5v4H5z" fill="#5fc7c0" /></>],
  ["Ocultar temporalmente", <path d="M0 7c0-2 3-2 3 0s-3 2-3 0M6 7c0-2 3-2 3 0s-3 2-3 0M3 7h3M2 5l3-2M8 5l3-2" stroke="#b4bcc6" />],
  ["Mostrar elementos ocultos", <><circle cx="5.500" cy="4" r="3" fill="#6fd3c9" /><path d="M5.500 7v3" stroke={L} strokeWidth="2" /></>],
  ["Propiedades temporales", <><path d="M1 1h6v6H1z" fill="#cfd5db" /><path d="M4 4h6v6H4z" fill="#4d5664" stroke={L} strokeDasharray="1.500 1" /></>],
  ["Modelo analítico", <><path d="M0 3 3 1h7v8H1zM0 5h10M3 1v8M6 1v8" stroke="#cfd5db" strokeWidth=".9" /><circle cx="9" cy="7" r="2" fill="#6fd3c9" /></>],
  ["Conjunto de desplazamiento", <><path d="M1 5h5v5H1z" fill="#f2f4f6" /><path d="M4 2.500h6V8H7V4H4z" fill="#9aa3ae" /></>],
  ["Restricciones", <><path d="M1 1v9M10 1v4M1 3h9M1 7h5" stroke={L} /><circle cx="8.500" cy="7" r="2" fill="#6fd3c9" /><path d="M8.500 9v2" stroke={L} /></>],
];

function ViewArea() {
  return (
    <main className="flex min-w-0 flex-1 flex-col bg-[#465062] text-[8px]">
      <div className="flex h-[15px] shrink-0 items-center border-b border-black text-[#e1e5ea]">
        <button type="button" className="flex h-[14px] w-[85px] items-center bg-[#222a35] pr-1 pl-[3px] font-bold">
          <Ico s={10}>
            <path d="M0 5.500 5 1l5 4.500" stroke={L} strokeWidth="1.300" />
            <path d="M1.500 5.500 5 2.500l3.500 3V10h-2.500V7H4v3H1.500z" fill={L} />
          </Ico>
          <span className="ml-[5px] flex-1 text-left">(3D)</span>
          <CloseX />
        </button>
        <button type="button" className="flex h-[14px] items-center gap-[6px] pl-1">
          <Ico s={9}>
            <path d="M0 0h9v9H0z" fill="#8f98a5" />
            <path d="M3 0v5M6 4v5M3 5h6" stroke="#596371" />
          </Ico>
          02-Nivel Planta Baja
        </button>
        <button type="button" aria-label="Lista de vistas" className="mr-1 ml-auto">
          <Ico s={6}><path d="M.5 1h5" stroke="#b9c0c9" /><path d="M.8 3h4.400L3 5.300z" fill="#b9c0c9" /></Ico>
        </button>
      </div>
      <div className="flex min-h-0 flex-1">
        <div className="relative min-w-0 flex-1 overflow-hidden bg-white">
          <BeamDrawing />
          <span className="absolute top-[10px] left-[3px] text-[#2f4a88]">0.0000 m</span>
          <div className="absolute top-[42px] right-[20px] flex w-[80px] flex-col items-center">
            <div className="z-10 flex h-[36px] w-[35px] items-center justify-center border border-[#c2c4c8] bg-gradient-to-b from-[#f1f1f1] to-[#d6d7dc] text-[6px] font-bold text-[#8b8d90]">FRONTAL</div>
            <Ico w={80} h={8} className="-mt-1">
              <ellipse cx="40" cy="4" rx="38" ry="2.500" fill="#c6cbe8" opacity=".7" />
              <ellipse cx="40" cy="4" rx="22" ry="2.500" fill="#7d83a8" opacity=".5" />
            </Ico>
          </div>
          <div className="absolute top-[115px] right-0 flex h-[76px] w-6 flex-col items-center rounded-l border border-[#9a9bc8] bg-[#c4c4ec]/60 pt-[10px]">
            <button type="button" aria-label="Rueda de navegación">
              <Ico s={18}><path d="M9 2h7v7a7 7 0 1 1-7-7z" fill="#d6d6f0" stroke="#7e80a4" /><circle cx="9" cy="9" r="4" stroke="#7e80a4" /></Ico>
            </button>
            <Caret className="mt-1 text-[#7e80a4]" />
            <span className="my-1 h-px w-full bg-[#a9aacb]" />
            <button type="button" aria-label="Zoom">
              <Ico s={12}><path d="M1 2h7v6H1z" fill="#79bb7c" /><path d="m7 7 4 4" stroke="#8c8eae" /><circle cx="7" cy="7" r="2.500" stroke="#d4e8da" /></Ico>
            </button>
            <Caret className="mt-1 text-[#7e80a4]" />
          </div>
        </div>
        <div className="flex w-[13px] flex-col items-center justify-between border-r-2 border-[#465062] bg-[#2f3744] py-1">
          <Ico w={6} h={4}><path d="m.5 3.500 2.500-3 2.500 3" stroke="#9fa7b2" /></Ico>
          <span className="h-3 w-[3px] rounded bg-[#596270]" />
          <Ico w={6} h={4}><path d="m.5.500 2.500 3 2.500-3" stroke="#9fa7b2" /></Ico>
        </div>
      </div>
      <div className="flex h-3 shrink-0 items-center bg-[#353e4b] pl-[19px] text-[#d9dde3]">
        <button type="button" className="w-[38px] text-left">1 : 20</button>
        {viewIcons.map(([name, body]) => (
          <button type="button" key={name} aria-label={name} className="mr-[6px] flex w-[11px] justify-center">
            <Ico s={11}>{body}</Ico>
          </button>
        ))}
        <Ico w={4} h={6} className="ml-1"><path d="M3.500.5 1 3l2.500 2.500" stroke="#9fa7b2" /></Ico>
        <span className="flex flex-1 justify-center"><span className="h-[3px] w-3 rounded bg-[#596270]" /></span>
        <Ico w={4} h={6} className="mr-[15px]"><path d="M.5.500 3 3 .5 5.500" stroke="#9fa7b2" /></Ico>
      </div>
    </main>
  );
}

/* ---------- Project browser ---------- */

type Kind = "views" | "sheet" | "legend" | "table" | "plan" | "family" | "group" | "link";
type Node = { t: string; lv: "root" | "sub" | "leaf" | "leaf1"; sign?: "−" | "+"; kind?: Kind; bold?: boolean; hot?: boolean };
const tree: Node[] = [
  { t: "Vistas (todo)", lv: "root", sign: "−", kind: "views" },
  { t: "Planos estructurales", lv: "sub", sign: "−" },
  { t: "01-Nivel Fundaciones", lv: "leaf", kind: "sheet" },
  { t: "02-Nivel Planta Baja", lv: "leaf", kind: "sheet", hot: true },
  { t: "03-Nivel Primera Planta", lv: "leaf", kind: "sheet" },
  { t: "04-Nivel Segunda Planta", lv: "leaf", kind: "sheet" },
  { t: "05-Nivel Tercera Planta", lv: "leaf", kind: "sheet" },
  { t: "06-Nivel Cuarta Planta", lv: "leaf", kind: "sheet" },
  { t: "07-Nivel Quinta Planta", lv: "leaf", kind: "sheet" },
  { t: "Vistas 3D", lv: "sub", sign: "−" },
  { t: "Analytical Model", lv: "leaf", kind: "sheet" },
  { t: "(3D)", lv: "leaf", kind: "sheet", bold: true },
  { t: "Alzados (Alzado de edificio)", lv: "sub", sign: "−" },
  { t: "Este", lv: "leaf", kind: "sheet" },
  { t: "Norte", lv: "leaf", kind: "sheet" },
  { t: "Oeste", lv: "leaf", kind: "sheet" },
  { t: "Sur", lv: "leaf", kind: "sheet" },
  { t: "Leyendas", lv: "root", sign: "−", kind: "legend" },
  { t: "Detalle losa alivianada de viguetas", lv: "leaf1", kind: "sheet" },
  { t: "Detalles de Doblado", lv: "leaf1", kind: "sheet" },
  { t: "Especificaciones", lv: "leaf1", kind: "sheet" },
  { t: "Ubicacion", lv: "leaf1", kind: "sheet" },
  { t: "Tablas de planificación/Cantidades (todo)", lv: "root", kind: "table" },
  { t: "Planos (todo)", lv: "root", kind: "plan" },
  { t: "Familias", lv: "root", sign: "+", kind: "family" },
  { t: "Grupos", lv: "root", sign: "+", kind: "group" },
  { t: "Vínculos de Revit", lv: "root", kind: "link" },
];

const treeIcon: Record<Kind, React.ReactNode> = {
  views: <><path d="M3 .5H.5V3M8 .5h2.500V3M3 10.500H.5V8M8 10.500h2.500V8" stroke="#aab2bc" strokeWidth=".8" /><path d="m3 4 1.500-1.500H9V7L7.500 8.500H3z" fill="#f1f3f5" /></>,
  sheet: <><rect x=".5" y=".5" width="10" height="10" stroke="#aab2bc" strokeDasharray="1 1" /><path d="M1.500 1.500h8v8h-8z" fill="#d6dce1" /></>,
  legend: <><path d="M.5 1h10v9H.5z" fill="#dfe4e8" /><path d="M.5 3h10" stroke="#7b8491" /><path d="M2 5h2M5 5h1M7.500 5h2M2 8h2M5 8h1M7.500 8h2" stroke="#48515f" /></>,
  table: <><rect x=".5" y="1.500" width="10" height="8" stroke={L} /><path d="M.5 4h10M.5 6.500h10M4 1.500v8M7 1.500v8" stroke={L} strokeWidth=".8" /></>,
  plan: <path d="M.5 2H7l1 2.500 2.500 1V10H.5z" fill="#e6eaee" />,
  family: <path d="M1 1h4v4H1zM6 1h4v9H1V6h5z" fill="#e6eaee" />,
  group: <><path d="M2.500.5H.5v10h2M8.500.5h2v10h-2" stroke={L} /><circle cx="4.500" cy="4" r="2" fill={L} /><path d="M4 4.500h4.500V9H4z" fill="#f1f3f5" stroke="#48515f" strokeWidth=".5" /></>,
  link: <><ellipse cx="3.500" cy="7" rx="2" ry="2.800" transform="rotate(35 3.500 7)" stroke="#b8947c" /><ellipse cx="7.500" cy="4.500" rx="2" ry="2.800" transform="rotate(35 7.500 4.500)" stroke="#b8947c" /></>,
};

const indent = { root: "pl-[4px]", sub: "pl-[14px]", leaf: "pl-[17px]", leaf1: "pl-[6px]" };

function ProjectBrowser() {
  return (
    <aside className="flex w-[202px] shrink-0 flex-col border-l-2 border-[#252c36] bg-[#3c4555] text-[8px] text-[#e0e4e9]">
      <div className="flex h-3 shrink-0 items-center justify-between bg-[#222a35] pl-[2px]">
        <h2>Navegador de proyectos - Proyecto1</h2>
        <button type="button" aria-label="Cerrar navegador"><CloseX /></button>
      </div>
      <label className="mx-[3px] mt-[5px] ml-[7px] flex h-[16px] shrink-0 items-center gap-[5px] bg-[#2f3744] pl-[5px]">
        <Ico s={11}><circle cx="4.500" cy="4.500" r="3.600" stroke="#aab2bc" /><path d="m7.200 7.200 3.300 3.300" stroke="#aab2bc" /></Ico>
        <input aria-label="Buscar" placeholder="Buscar" className="min-w-0 flex-1 bg-transparent text-[8px] text-[#e0e4e9] placeholder-[#9aa2ad] outline-none" />
      </label>
      <ul className="mt-[5px] grid h-[361px] auto-rows-fr">
        {tree.map((n) => (
          <li key={n.t} className={`flex min-h-0 items-center whitespace-nowrap ${indent[n.lv]} ${n.hot ? "border-y border-[#353d4a] bg-[#394251]" : ""}`}>
            {n.lv === "leaf" || n.lv === "leaf1" ? (
              <span className="flex w-[19px] items-center self-stretch border-l border-[#4d5766]">
                <span className="h-px w-full bg-[#465060]" />
              </span>
            ) : n.sign ? (
              <button type="button" aria-label={`Alternar ${n.t}`} className="flex h-2 w-[8px] items-center">
                <Ico s={6}><path d={n.sign === "+" ? "M0 3h6M3 0v6" : "M0 3h6"} stroke="#b9c0c9" /></Ico>
              </button>
            ) : (
              <span className="w-[8px]" />
            )}
            {n.kind && <Ico s={11} className={n.lv === "root" ? "mr-[2px] ml-1" : "mr-[2px] ml-px"}>{treeIcon[n.kind]}</Ico>}
            <a href="#vista" className={n.bold ? "font-bold" : n.lv === "sub" ? "pl-[2px]" : ""}>{n.t}</a>
          </li>
        ))}
      </ul>
    </aside>
  );
}

/* ---------- Status bar ---------- */

const selectIcons: [string, React.ReactNode][] = [
  ["Seleccionar vínculos", <path d="M0 2h5M5 2l3 5M5 7h5M7 5v5" stroke={L} key="a" />],
  ["Seleccionar subyacentes", <path d="M0 3h6M3 1v5M5 4l5 6M5 8h3" stroke={L} key="b" />],
  ["Seleccionar bloqueados", <path d="M1 1h4v4M3 3v7M5 5l5 5M6 9h3" stroke={L} key="c" />],
  ["Seleccionar por cara", <><path d="M1 1h5v6H1z" fill="#cfd5db" /><path d="m5 4 5 6M5 9h4" stroke={L} /></>],
  ["Arrastrar al seleccionar", <><path d="M0 4h5M2.500 1v6M5 5l5 5" stroke={L} /><path d="m6 1 4 3M10 1 6 4" stroke="#e0607a" /></>],
  ["Procesos en segundo plano", <circle cx="5.500" cy="5.500" r="4" stroke="#9aa3ae" strokeDasharray="1.500 1.500" key="f" />],
];

function StatusBar() {
  return (
    <footer className="flex h-[15px] shrink-0 items-center border-t border-[#272e38] bg-[#3b4453] pt-px text-[8px] text-[#d9dde3]">
      <p className="w-[594px] shrink-0">Clic para seleccionar, TAB para alternar, CTRL para añadir y MAYÚS para anular una selección.</p>
      <Ico s={12}>
        <path d="M1 2h4v7H1z" fill="#8fc7b8" />
        <path d="m5 1 3 2v4L5 9z" fill="#e2e6ea" />
        <path d="M6 5h5v3L9 11 6 9z" fill="#4fae9c" />
        <path d="M9 2h2v4H9z" fill="#c98f4e" />
      </Ico>
      <div className="flex flex-1 items-center justify-center pl-[103px]">
        <button type="button" className="flex items-center gap-px text-[#aeb5bf]">
          <Ico s={11}><path d="M1 8h9M3 8V5h4" stroke="#9aa3ae" /><path d="M7 1h3v6H7z" fill="#8d96a2" /></Ico>:0
        </button>
        <button type="button" aria-label="Opciones de diseño" className="ml-5"><Ico s={11}><path d="M0 1h11v9H0z" fill="#f1f3f5" /><path d="M2 3.500h7M2 5.500h7M2 7.500h7" stroke="#3c4555" /></Ico></button>
        <button type="button" aria-label="Solo activas" className="ml-[7px]"><Ico s={11}><path d="M1 1h8v9H1z" fill="#9aa3ae" /><path d="M3 3h4M3 5h6M3 7h6" stroke="#3c4555" /></Ico></button>
        <label className="relative ml-[6px] flex items-center">
          <select aria-label="Opción de diseño" disabled className="w-[135px] appearance-none bg-transparent text-[8px] text-[#828b98]">
            <option>Modelo base</option>
          </select>
          <span className="pointer-events-none absolute right-0"><Caret className="text-[#6f7886]" /></span>
        </label>
      </div>
      <div className="mr-[46px] ml-[114px] flex items-center gap-[6px]">
        {selectIcons.map(([name, body]) => (
          <button type="button" key={name} aria-label={name}><Ico s={11}>{body}</Ico></button>
        ))}
        <button type="button" className="flex items-center" aria-label="Filtro: 1 elemento">
          <Ico s={11}><path d="M.5 1h9L6 5.500V10H4V5.500z" fill={L} /><path d="M7 7h3M7 9h3" stroke={L} /></Ico>:1
        </button>
      </div>
    </footer>
  );
}

export default function App() {
  return (
    <div className="flex h-screen flex-col overflow-hidden bg-black pt-4 pb-[18px] font-['Roboto','Noto_Sans',sans-serif] select-none">
      <div className="flex min-h-0 flex-1 flex-col">
        <TitleBar />
        <RibbonTabs />
        <div className="flex h-px shrink-0 bg-[#20272f]">
          <span className="ml-[600px] flex-1 bg-[#4f8a26]" />
        </div>
        <Ribbon />
        <div className="flex h-[18px] shrink-0 items-center bg-[#465052] pl-1 text-[8px] text-[#cdd3d8]">Modificar | Armazón estructural</div>
        <div className="flex min-h-0 flex-1">
          <PropertiesPalette />
          <ViewArea />
          <ProjectBrowser />
        </div>
        <StatusBar />
      </div>
    </div>
  );
}
